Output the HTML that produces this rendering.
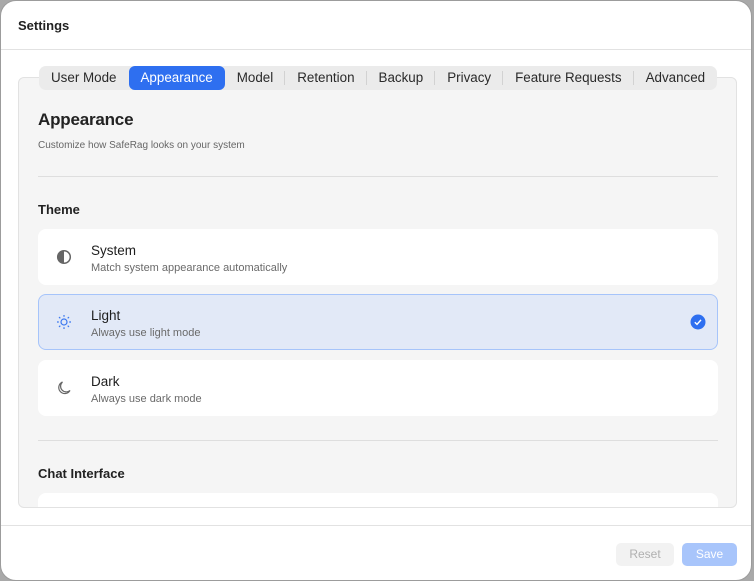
<!DOCTYPE html>
<html><head><style>
*{margin:0;padding:0;box-sizing:border-box}
body{width:754px;height:581px;background:#a9a9a9;font-family:"Liberation Sans",sans-serif;position:relative;overflow:hidden}
.win{position:absolute;left:0;top:0;width:752px;height:581px;background:#fff;border-radius:16px;border:1px solid #9c9c9c;overflow:hidden}
.t{position:absolute;left:17px;top:17px;font-size:13px;font-weight:bold;color:#222}
.hl{position:absolute;left:0;right:0;top:48px;border-top:1px solid #e2e2e2}
.panel{position:absolute;left:17px;top:76px;width:719px;height:431px;background:#f5f5f5;border:1px solid #e2e2e2;border-radius:6px;overflow:hidden}
.tabs{position:absolute;left:38px;top:65px;width:678px;height:24px;background:#ebebeb;border-radius:7px;display:flex;align-items:center;font-size:13.4px;color:#2a2a2a}
.tab{height:24px;line-height:24px;padding:0 12px;position:relative;white-space:nowrap}
.tab.s::after{content:"";position:absolute;right:0;top:5px;height:14px;border-right:1px solid #d2d2d2}
.tab.a{background:#2e6ff0;color:#fff;border-radius:6px}
h2{position:absolute;left:19px;top:32px;font-size:17px;font-weight:bold;color:#222;letter-spacing:-0.2px}
.sub{position:absolute;left:19px;top:62px;font-size:10px;color:#666}
.dv{position:absolute;left:19px;width:680px;border-top:1px solid #dedede}
.sec{position:absolute;left:19px;font-size:13px;font-weight:bold;color:#222}
.card{position:absolute;left:19px;width:680px;height:56px;background:#fff;border-radius:8px}
.card.sel{background:#e2e9f7;border:1.5px solid #a6c4fa}
.card .ti{position:absolute;left:53px;top:14px;font-size:13.5px;color:#1e1e1e}
.card .de{position:absolute;left:53px;top:33px;font-size:11px;color:#6a6a6a}
.card svg.ic{position:absolute;left:18px;top:20px}
.fl{position:absolute;left:0;right:0;top:524px;border-top:1px solid #e2e2e2}
.btn{position:absolute;top:542px;height:23px;border-radius:5px;font-size:12px;line-height:23px;text-align:center}
</style></head><body>
<div class="win">
<div class="t">Settings</div>
<div class="hl"></div>
<div class="panel">
<h2>Appearance</h2>
<div class="sub">Customize how SafeRag looks on your system</div>
<div class="dv" style="top:98px"></div>
<div class="sec" style="top:124px">Theme</div>
<div class="card" style="top:151px"><svg class="ic" width="16" height="16" viewBox="0 0 16 16"><circle cx="8" cy="8" r="6.3" fill="none" stroke="#666" stroke-width="1.5"/><path d="M8 1.7A6.3 6.3 0 0 0 8 14.3Z" fill="#666"/></svg><div class="ti">System</div><div class="de">Match system appearance automatically</div></div>
<div class="card sel" style="top:216px"><svg class="ic" width="16" height="16" viewBox="0 0 16 16" style="left:17px;top:19px" stroke="#3b78f0" stroke-width="1.2" fill="none"><circle cx="8" cy="8" r="3"/><path d="M8 1v1.8M8 13.2V15M1 8h1.8M13.2 8H15M3 3l1.3 1.3M11.7 11.7L13 13M3 13l1.3-1.3M11.7 4.3L13 3"/></svg><div class="ti" style="left:52px;top:13px">Light</div><div class="de" style="left:52px;top:32px">Always use light mode</div><svg style="position:absolute;right:11px;top:19px" width="16" height="16" viewBox="0 0 16 16"><circle cx="8" cy="8" r="7.5" fill="#2e6ff0"/><path d="M4.8 8.2l2.2 2.2 4-4.5" stroke="#fff" stroke-width="1.4" fill="none"/></svg></div>
<div class="card" style="top:282px"><svg class="ic" width="16" height="16" viewBox="0 0 16 16"><path d="M6.5 2A6 6 0 1 0 14 10.5 5.2 5.2 0 0 1 6.5 2Z" fill="none" stroke="#666" stroke-width="1.2"/></svg><div class="ti">Dark</div><div class="de">Always use dark mode</div></div>
<div class="dv" style="top:362px"></div>
<div class="sec" style="top:388px">Chat Interface</div>
<div class="card" style="top:415px"></div>
</div>
<div class="tabs"><div class="tab">User Mode</div><div class="tab a">Appearance</div><div class="tab s">Model</div><div class="tab s">Retention</div><div class="tab s">Backup</div><div class="tab s">Privacy</div><div class="tab s">Feature Requests</div><div class="tab">Advanced</div></div>
<div class="fl"></div>
<div class="btn" style="left:615px;width:58px;background:#f2f2f2;color:#b0b0b0">Reset</div>
<div class="btn" style="left:681px;width:55px;background:#a8c5fb;color:#fff;font-weight:500">Save</div>
</div>
</body></html>
